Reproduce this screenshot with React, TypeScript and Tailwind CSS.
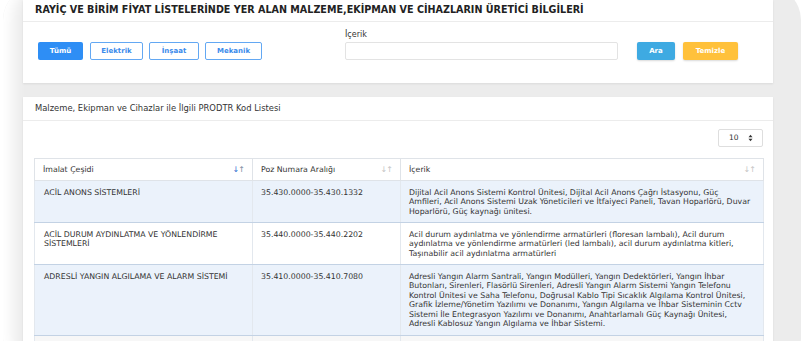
import React from "react";

function SortIcon({ dark }: { dark?: boolean }) {
  return (
    <span className={`text-[8px] tracking-[-1px] ${dark ? "text-[#7a8aa0]" : "text-[#c4c4c4]"}`}>
      <span className={dark ? "text-[#2e6fd1]" : ""}>↓</span>↑
    </span>
  );
}

const rows = [
  {
    a: ["ACİL ANONS SİSTEMLERİ"],
    b: "35.430.0000-35.430.1332",
    c: [
      "Dijital Acil Anons Sistemi Kontrol Ünitesi, Dijital Acil Anons Çağrı İstasyonu, Güç",
      "Amfileri, Acil Anons Sistemi Uzak Yöneticileri ve İtfaiyeci Paneli, Tavan Hoparlörü, Duvar",
      "Hoparlörü, Güç kaynağı ünitesi.",
    ],
    blue: true,
  },
  {
    a: ["ACİL DURUM AYDINLATMA VE YÖNLENDİRME", "SİSTEMLERİ"],
    b: "35.440.0000-35.440.2202",
    c: [
      "Acil durum aydınlatma ve yönlendirme armatürleri (floresan lambalı), Acil durum",
      "aydınlatma ve yönlendirme armatürleri (led lambalı), acil durum aydınlatma kitleri,",
      "Taşınabilir acil aydınlatma armatürleri",
    ],
    blue: false,
  },
  {
    a: ["ADRESLİ YANGIN ALGILAMA VE ALARM SİSTEMİ"],
    b: "35.410.0000-35.410.7080",
    c: [
      "Adresli Yangın Alarm Santrali, Yangın Modülleri, Yangın Dedektörleri, Yangın İhbar",
      "Butonları, Sirenleri, Flasörlü Sirenleri, Adresli Yangın Alarm Sistemi Yangın Telefonu",
      "Kontrol Ünitesi ve Saha Telefonu, Doğrusal Kablo Tipi Sıcaklık Algılama Kontrol Ünitesi,",
      "Grafik İzleme/Yönetim Yazılımı ve Donanımı, Yangın Algılama ve İhbar Sisteminin Cctv",
      "Sistemi İle Entegrasyon Yazılımı ve Donanımı, Anahtarlamalı Güç Kaynağı Ünitesi,",
      "Adresli Kablosuz Yangın Algılama ve İhbar Sistemi.",
    ],
    blue: true,
  },
];

export default function App() {
  return (
    <div className="w-[801px] h-[341px] overflow-hidden bg-white font-['DejaVu_Sans',Verdana,sans-serif] text-[#333]">
      <div className="ml-[3px] mr-[0px] -mt-[14px] h-[385px] rounded-[34px] bg-[#ececec] pt-[14px] pl-[20px] pr-[28px] shadow-[inset_18px_0_14px_-8px_#ffffff]">
        {/* Top panel */}
        <div className="bg-white h-[83px] shadow-[0_1px_2px_rgba(0,0,0,0.08)]">
          <div className="h-[22px] border-b border-[#ececec] flex items-center pl-[12px]">
            <span className="text-[9.6px] font-bold text-[#222] whitespace-nowrap">
              RAYİÇ VE BİRİM FİYAT LİSTELERİNDE YER ALAN MALZEME,EKİPMAN VE CİHAZLARIN ÜRETİCİ BİLGİLERİ
            </span>
          </div>
          <div className="flex items-end pt-[8px] pl-[15px]">
            <button className="w-[45px] h-[18px] rounded-[2px] bg-[#2e8ef5] text-white text-[7px] font-bold">Tümü</button>
            <button className="ml-[7px] w-[53px] h-[18px] rounded-[2px] border border-[#63a8f3] text-[#3b8beb] text-[7px] font-bold">Elektrik</button>
            <button className="ml-[6px] w-[50px] h-[18px] rounded-[2px] border border-[#63a8f3] text-[#3b8beb] text-[7px] font-bold">İnşaat</button>
            <button className="ml-[6px] w-[57px] h-[18px] rounded-[2px] border border-[#63a8f3] text-[#3b8beb] text-[7px] font-bold">Mekanik</button>
            <div className="ml-[83px] flex flex-col">
              <span className="text-[8px] leading-[10px] mb-[2px] text-[#333]">İçerik</span>
              <div className="w-[273px] h-[18px] rounded-[2px] border border-[#e3e3e3] bg-white" />
            </div>
            <button className="ml-[19px] w-[38px] h-[18px] rounded-[2px] bg-[#3eaae2] text-white text-[7px] font-bold shadow-[0_1px_2px_rgba(0,0,0,0.15)]">Ara</button>
            <button className="ml-[8px] w-[55px] h-[18px] rounded-[2px] bg-[#ffc13b] text-white text-[7px] font-bold shadow-[0_1px_2px_rgba(0,0,0,0.15)]">Temizle</button>
          </div>
        </div>

        {/* Bottom panel */}
        <div className="mt-[14px] bg-white h-[300px] shadow-[0_1px_2px_rgba(0,0,0,0.08)]">
          <div className="h-[24px] border-b border-[#ececec] flex items-center pl-[12px]">
            <span className="text-[8.4px] text-[#333] whitespace-nowrap">
              Malzeme, Ekipman ve Cihazlar ile İlgili PRODTR Kod Listesi
            </span>
          </div>
          <div className="pl-[11px] pr-[10px]">
            <div className="flex justify-end pt-[8px]">
              <div className="w-[45px] h-[18px] rounded-[2px] border border-[#dedede] flex items-center justify-between pl-[10px] pr-[9px] text-[7.5px] text-[#333]">
                <span>10</span>
                <svg width="5" height="8" viewBox="0 0 5 8">
                  <path d="M0.5 3.2 L2.5 0.8 L4.5 3.2 Z" fill="#333" />
                  <path d="M0.5 4.8 L2.5 7.2 L4.5 4.8 Z" fill="#333" />
                </svg>
              </div>
            </div>
            <table className="mt-[11px] w-[729px] border-collapse table-fixed text-[7.8px]">
              <colgroup>
                <col className="w-[218px]" />
                <col className="w-[148px]" />
                <col className="w-[363px]" />
              </colgroup>
              <thead>
                <tr className="h-[22px]">
                  <th className="border border-[#dfe3e8] px-[8px] text-left font-normal text-[7.8px] text-[#333]">
                    <div className="flex justify-between items-center">
                      <span>İmalat Çeşidi</span>
                      <SortIcon dark />
                    </div>
                  </th>
                  <th className="border border-[#dfe3e8] px-[8px] text-left font-normal text-[7.8px] text-[#333]">
                    <div className="flex justify-between items-center">
                      <span>Poz Numara Aralığı</span>
                      <SortIcon />
                    </div>
                  </th>
                  <th className="border border-[#dfe3e8] px-[8px] text-left font-normal text-[7.8px] text-[#333]">
                    <div className="flex justify-between items-center">
                      <span>İçerik</span>
                      <SortIcon />
                    </div>
                  </th>
                </tr>
              </thead>
              <tbody>
                {rows.map((r, i) => (
                  <tr key={i} className={r.blue ? "bg-[#ebf2fb]" : "bg-white"}>
                    <td className="align-top border-x border-[#e3e8ee] border-b border-b-[#c3d2e4] px-[9px] pt-[6.5px] pb-[6px] leading-[9.5px] whitespace-nowrap">
                      {r.a.map((l, j) => (
                        <div key={j}>{l}</div>
                      ))}
                    </td>
                    <td className="align-top border-x border-[#e3e8ee] border-b border-b-[#c3d2e4] px-[8px] pt-[6.5px] pb-[6px] leading-[9.5px] whitespace-nowrap">
                      {r.b}
                    </td>
                    <td className="align-top border-x border-[#e3e8ee] border-b border-b-[#c3d2e4] px-[8px] pt-[6.5px] pb-[6px] leading-[9.5px] whitespace-nowrap">
                      {r.c.map((l, j) => (
                        <div key={j}>{l}</div>
                      ))}
                    </td>
                  </tr>
                ))}
                <tr className="bg-[#f7f7f7] h-[30px]">
                  <td className="border-x border-[#e3e8ee]" />
                  <td className="border-x border-[#e3e8ee]" />
                  <td className="border-x border-[#e3e8ee]" />
                </tr>
              </tbody>
            </table>
          </div>
        </div>
      </div>
    </div>
  );
}
